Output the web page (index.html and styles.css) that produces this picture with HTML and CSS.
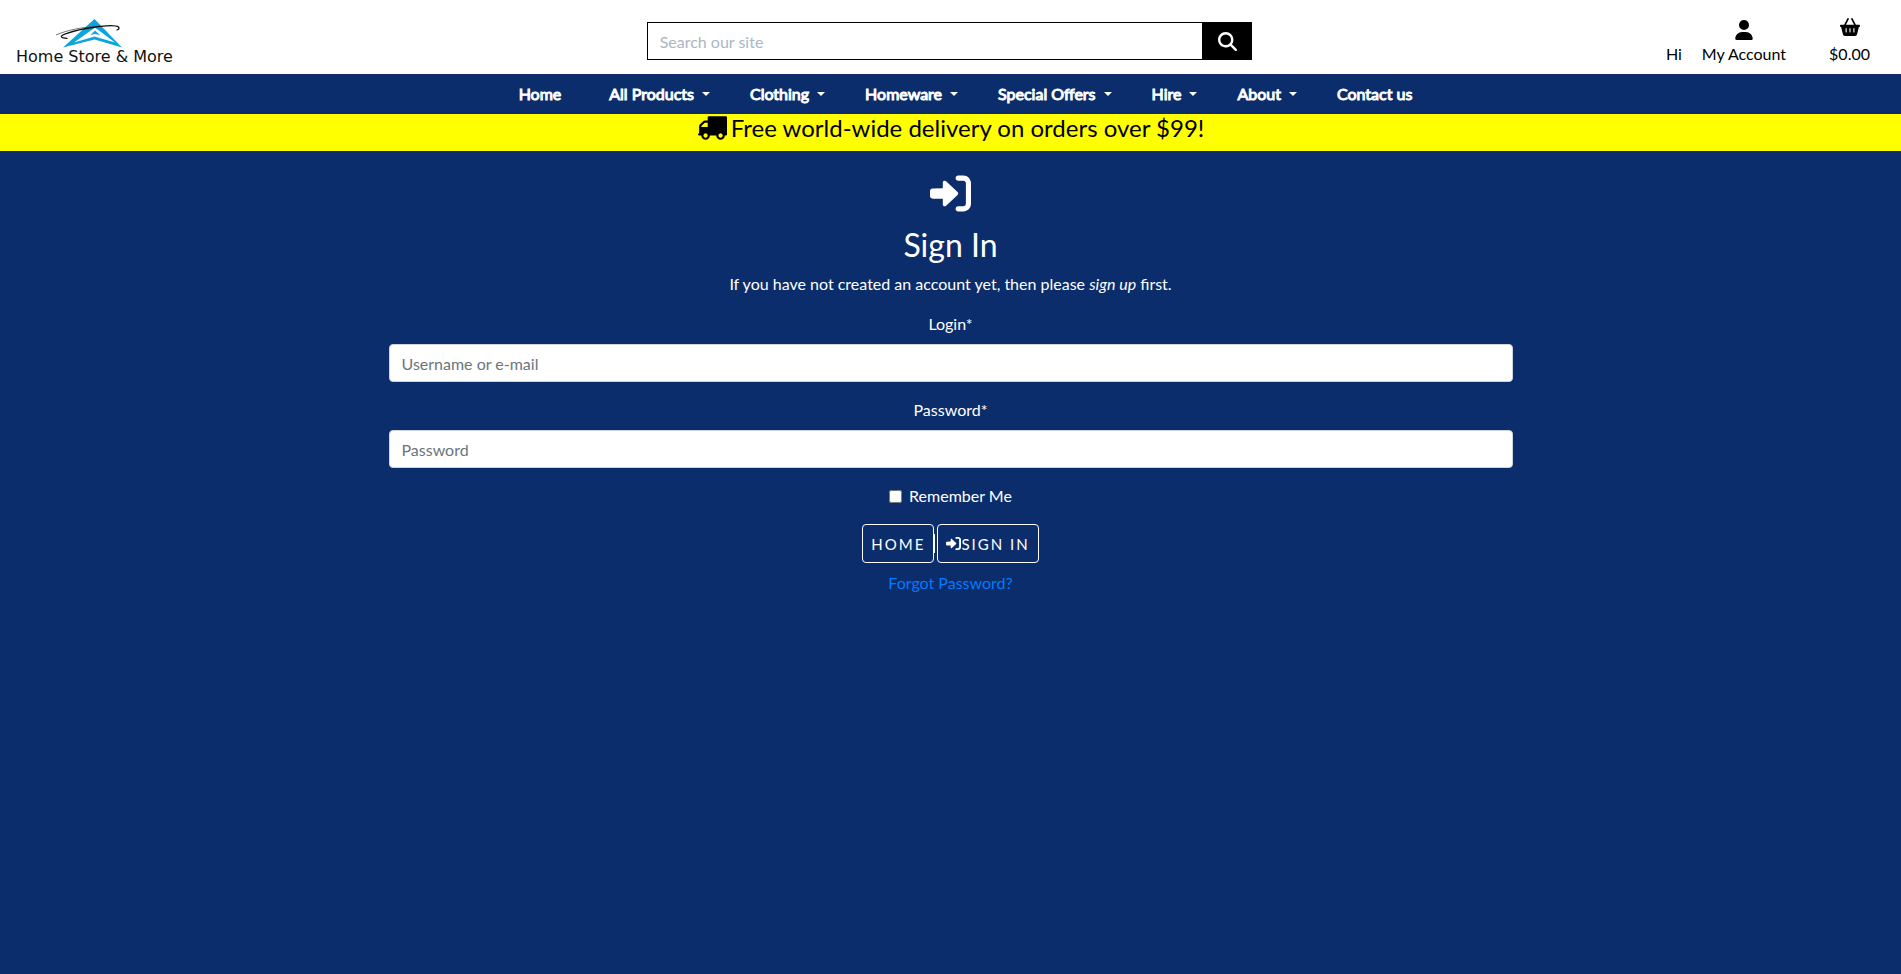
FILE: index.html
```html
<!DOCTYPE html>
<html lang="en">
<head>
<meta charset="utf-8">
<title>Home Store &amp; More - Sign In</title>
<link rel="stylesheet" href="styles.css">
</head>
<body>
<svg class="sprite" aria-hidden="true">
  <symbol id="enter" viewBox="0 0 512 512"><path d="M352 96l64 0c17.700 0 32 14.300 32 32l0 256c0 17.700-14.300 32-32 32l-64 0c-17.700 0-32 14.300-32 32s14.300 32 32 32l64 0c53 0 96-43 96-96l0-256c0-53-43-96-96-96l-64 0c-17.700 0-32 14.300-32 32s14.300 32 32 32zm-7.500 177c4.800-4.500 7.500-10.800 7.500-17.300s-2.700-12.700-7.500-17.300l-144-136c-7-6.600-17.200-8.400-26-4.600s-14.500 12.500-14.500 22l0 72L32 192c-17.700 0-32 14.300-32 32l0 64c0 17.700 14.300 32 32 32l128 0 0 72c0 9.600 5.700 18.200 14.500 22s19 2 26-4.600l144-136z"/></symbol>
</svg>
<header class="top">
  <a class="brand" href="#">
    <svg class="brand-mark" viewBox="0 0 78 30" aria-hidden="true">
      <path fill="#0aa5df" fill-rule="evenodd" d="M39.500 0L67 28.500L39.500 20.500L8 28.500ZM40 8.500L19 23.500L39.500 17.500L60 23.500Z"/>
      <path fill="#0aa5df" d="M40 11.500L45 16L40 15L35.500 16Z"/>
      <path fill="none" stroke="#555" stroke-width="0.8" d="M1 16C12 11 28 8 45 7"/>
      <path fill="none" stroke="#111" stroke-width="1.3" stroke-linecap="round" d="M12 19.300C5 19 4 17 12 14.300C20 11.500 30 9.500 38 8.500C47 7 60 5.500 63.500 8C64.800 9.500 63.500 10.500 62 11"/>
    </svg>
    <span class="brand-name">Home Store &amp; More</span>
  </a>
  <form class="search">
    <input class="search-input" type="text" placeholder="Search our site" aria-label="Search our site">
    <button class="search-button" type="button" aria-label="Search">
      <svg class="icon-search" viewBox="0 0 512 512"><path d="M416 208c0 45.900-14.900 88.300-40 122.700L502.600 457.400c12.500 12.500 12.500 32.800 0 45.300s-32.800 12.500-45.300 0L330.700 376c-34.400 25.200-76.800 40-122.700 40C93.100 416 0 322.900 0 208S93.100 0 208 0S416 93.100 416 208zM208 352a144 144 0 1 0 0-288 144 144 0 1 0 0 288z"/></svg>
    </button>
  </form>
  <div class="account">
    <span class="greeting">Hi</span>
    <a class="account-link" href="#">
      <svg class="icon-user" viewBox="0 0 448 512"><path d="M224 256A128 128 0 1 0 224 0a128 128 0 1 0 0 256zm-45.700 48C79.800 304 0 383.800 0 482.300C0 498.700 13.300 512 29.700 512H418.300c16.400 0 29.700-13.300 29.700-29.700C448 383.800 368.200 304 269.700 304H178.300z"/></svg>
      <span>My Account</span>
    </a>
    <a class="account-link basket" href="#">
      <svg class="icon-basket" viewBox="0 0 576 512"><path d="M253.300 35.100c6.100-11.800 1.500-26.300-10.200-32.400s-26.300-1.500-32.400 10.200L117.600 192H32c-17.700 0-32 14.300-32 32s14.300 32 32 32L83.900 463.500C91 492 116.600 512 146 512H430c29.400 0 55-20 62.100-48.500L544 256c17.700 0 32-14.300 32-32s-14.300-32-32-32H458.400L365.300 12.900C359.200 1.200 344.700-3.400 332.900 2.700s-16.300 20.600-10.200 32.400L404.300 192H171.700L253.300 35.100zM192 304v96c0 8.800-7.200 16-16 16s-16-7.200-16-16V304c0-8.800 7.200-16 16-16s16 7.200 16 16zm96-16c8.800 0 16 7.200 16 16v96c0 8.800-7.200 16-16 16s-16-7.200-16-16V304c0-8.800 7.200-16 16-16zm128 16v96c0 8.800-7.200 16-16 16s-16-7.200-16-16V304c0-8.800 7.200-16 16-16s16 7.200 16 16z"/></svg>
      <span>$0.00</span>
    </a>
  </div>
</header>
<nav class="menu">
  <a class="menu-item menu-home" href="#">Home</a>
  <button class="menu-item has-caret" type="button">All Products</button>
  <button class="menu-item has-caret" type="button">Clothing</button>
  <button class="menu-item has-caret" type="button">Homeware</button>
  <button class="menu-item has-caret" type="button">Special Offers</button>
  <button class="menu-item has-caret" type="button">Hire</button>
  <button class="menu-item has-caret" type="button">About</button>
  <a class="menu-item" href="#">Contact us</a>
</nav>
<div class="delivery">
  <svg class="icon-truck" viewBox="0 256 1792 1408" aria-hidden="true"><path d="M640 1408q0-52-38-90t-90-38-90 38-38 90 38 90 90 38 90-38 38-90zm-384-512h384v-256h-158q-13 0-22 9l-195 195q-9 9-9 22v30zm1280 512q0-52-38-90t-90-38-90 38-38 90 38 90 90 38 90-38 38-90zm256-1088v1024q0 15-4 26.500t-13.500 18.500-16.500 11.500-23.500 6-22.500 2-25.500 0-22.500-.5q0 106-75 181t-181 75-181-75-75-181h-384q0 106-75 181t-181 75-181-75-75-181h-64q-3 0-22.500.5t-25.500 0-22.500-2-23.500-6-16.500-11.500-13.500-18.500-4-26.500q0-26 19-45t45-19v-320q0-8-.5-35t0-38 2.500-34.500 6.500-37 14-30.500 22.500-30l198-198q19-19 50.500-32t58.500-13h160v-192q0-26 19-45t45-19h1024q26 0 45 19t19 45z"/></svg>
  <span>Free world-wide delivery on orders over $99!</span>
</div>
<main class="signin">
  <svg class="icon-enter" aria-hidden="true"><use href="#enter"/></svg>
  <h1 class="title">Sign In</h1>
  <p class="intro">If you have not created an account yet, then please <a class="signup" href="#">sign up</a> first.</p>
  <form class="form">
    <label class="label" for="login">Login*</label>
    <input class="field" id="login" type="text" placeholder="Username or e-mail">
    <label class="label" for="password">Password*</label>
    <input class="field" id="password" type="password" placeholder="Password">
    <div class="remember">
      <input class="check" id="remember" type="checkbox">
      <label for="remember">Remember Me</label>
    </div>
    <div class="actions">
      <a class="button" href="#">HOME</a>
      <span class="divider"></span>
      <button class="button" type="button"><svg class="icon-small" aria-hidden="true"><use href="#enter"/></svg>SIGN IN</button>
    </div>
    <a class="forgot" href="#">Forgot Password?</a>
  </form>
</main>
</body>
</html>
```
FILE: styles.css
```css
* { box-sizing: border-box; }

body {
  margin: 0;
  min-height: 100vh;
  background: #0b2d6b;
  color: #fff;
  font: 16px/24px Lato, "Liberation Sans", sans-serif;
}

input, button { font: inherit; }
a { color: inherit; text-decoration: none; }
svg { display: block; fill: currentColor; }
.sprite { display: none; }

.top {
  display: grid;
  grid-template-columns: repeat(3, 1fr);
  align-items: start;
  height: 74px;
  background: #fff;
  color: #000;
}

.brand {
  display: flex;
  flex-direction: column;
  justify-self: start;
  align-items: center;
  padding: 19px 16px 0;
}
.brand-mark { width: 78px; height: 30px; }
.brand-name {
  font-family: "DejaVu Sans", sans-serif;
  font-size: 16px;
  line-height: 16px;
  color: #111;
}

.search { display: flex; margin: 22px 15px 0 13px; }
.search-input {
  flex: 1;
  min-width: 0;
  height: 38px;
  padding: 6px 12px;
  border: 1px solid #000;
  border-right: 0;
  border-radius: 0;
  background: #fff;
}
.search-input::placeholder { color: #aab7c4; }
.search-button {
  display: flex;
  align-items: center;
  justify-content: center;
  width: 50px;
  border: 0;
  background: #000;
  color: #fff;
}
.icon-search { width: 19px; height: 19px; }

.account {
  display: flex;
  justify-content: flex-end;
  align-items: flex-end;
  height: 66px;
  padding-right: 31px;
}
.greeting { margin-right: 20px; }
.account-link { display: flex; flex-direction: column; align-items: center; gap: 2px; }
.basket { margin-left: 43px; gap: 6px; }
.icon-user { width: 18px; height: 20px; }
.icon-basket { width: 20px; height: 18px; }

.menu {
  display: flex;
  justify-content: center;
  height: 40px;
  padding-left: 30px;
}
.menu-item {
  display: flex;
  align-items: center;
  padding: 0 20px;
  border: 0;
  background: none;
  color: #fff;
  white-space: nowrap;
  -webkit-text-stroke: 1px #fff;
}
.menu-home { padding-right: 28px; }
.has-caret::after {
  content: "";
  margin-left: 8px;
  border: 4px solid transparent;
  border-top-color: #fff;
  border-bottom: 0;
}

.delivery {
  display: flex;
  justify-content: center;
  gap: 4px;
  height: 37px;
  padding-top: 2px;
  background: #ff0;
  color: #000;
  font-size: 24px;
}
.icon-truck { width: 30px; height: 24px; }

.signin {
  display: flex;
  flex-direction: column;
  align-items: center;
  padding: 22px 20px;
}
.icon-enter { width: 41px; height: 41px; }
.title { margin: 12px 0 8px; font-size: 32px; font-weight: 400; line-height: 38px; }
.intro { margin: 0 0 16px; }
.signup { font-style: italic; }

.form {
  display: flex;
  flex-direction: column;
  align-items: center;
  width: 100%;
  max-width: 1124px;
}
.label { margin-bottom: 8px; }
.field {
  width: 100%;
  height: 38px;
  margin-bottom: 16px;
  padding: 6px 12px;
  border: 1px solid #ced4da;
  border-radius: 4px;
  background: #fff;
}
.field::placeholder { color: #6c757d; }

.remember { display: flex; align-items: center; gap: 7px; margin-bottom: 16px; }
.check { width: 13px; height: 13px; margin: 0; }

.actions { display: flex; align-items: center; margin-bottom: 8px; }
.button {
  display: flex;
  align-items: center;
  height: 39px;
  padding: 0 8px;
  border: 1px solid #fff;
  border-radius: 4px;
  background: none;
  color: #fff;
  font-size: 15px;
  letter-spacing: 2px;
}
.divider { width: 1px; height: 19px; margin-right: 2px; background: #fff; }
.icon-small { width: 15px; height: 15px; }
.forgot { color: #007bff; }
```
